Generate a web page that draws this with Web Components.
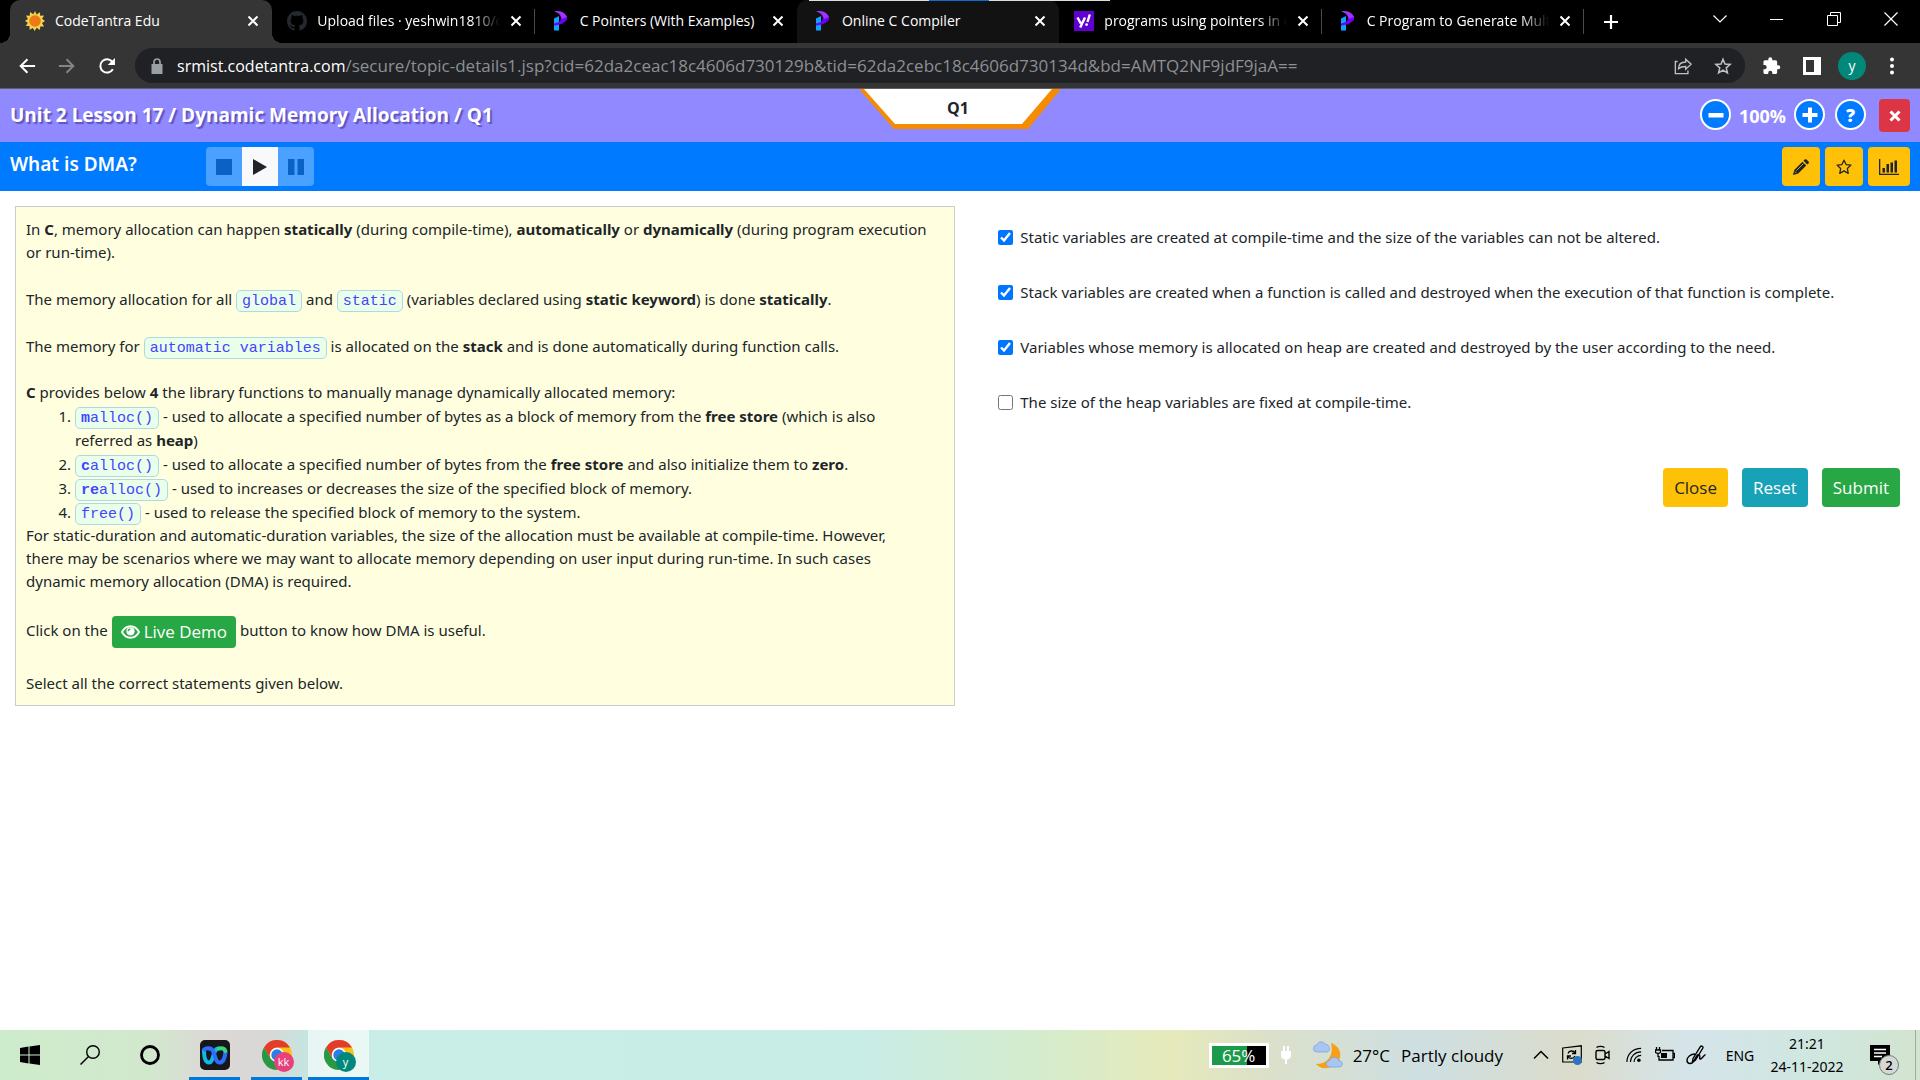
<!DOCTYPE html>
<html lang="en">
<head>
<meta charset="utf-8">
<title>CodeTantra Edu</title>
<style>
  html, body { margin: 0; height: 100%; }
  body { font-family: "Open Sans", "Noto Sans", sans-serif; color: #212529; background: #fff; }
</style>
</head>
<body>
<app-desktop>
  <tab-strip slot="tabs">
    <browser-tab icon="sun" state="active">CodeTantra Edu</browser-tab>
    <browser-tab icon="github">Upload files · yeshwin1810/c</browser-tab>
    <browser-tab icon="programiz" state="plain">C Pointers (With Examples)</browser-tab>
    <browser-tab icon="programiz" state="hover">Online C Compiler</browser-tab>
    <browser-tab icon="yahoo">programs using pointers in c</browser-tab>
    <browser-tab icon="programiz">C Program to Generate Multip</browser-tab>
  </tab-strip>
  <address-bar slot="address"></address-bar>
  <lesson-header slot="header">Unit 2 Lesson 17 / Dynamic Memory Allocation / Q1</lesson-header>
  <lesson-toolbar slot="toolbar">What is DMA?</lesson-toolbar>
  <question-card slot="question"></question-card>
  <answer-form slot="answers">
    <answer-option checked>Static variables are created at compile-time and the size of the variables can not be altered.</answer-option>
    <answer-option checked>Stack variables are created when a function is called and destroyed when the execution of that function is complete.</answer-option>
    <answer-option checked>Variables whose memory is allocated on heap are created and destroyed by the user according to the need.</answer-option>
    <answer-option>The size of the heap variables are fixed at compile-time.</answer-option>
    <action-button slot="actions" tone="warning">Close</action-button>
    <action-button slot="actions" tone="info">Reset</action-button>
    <action-button slot="actions" tone="success">Submit</action-button>
  </answer-form>
  <task-bar slot="taskbar"></task-bar>
</app-desktop>

<script>
const ICONS = {
  sun: ['0 0 20 20', '<path fill="#f3d34a" d="M10 0l1.600 3.400L15 1.200l.2 3.600 3.900-.4-2 3.300L20 10l-3 1.900 2 3.600-3.700-.1-.6 3.700-3-2.300L9.600 20l-1.700-3.100-3.300 1.900-.1-3.700-3.700-.2 2-3.200L0 10l2.900-2L1 4.600l3.700.1.4-3.600 3.200 2.200z"/><circle cx="10" cy="10" r="5.800" fill="#ee7a17"/>'],
  github: ['0 0 16 16', '<path fill="#24292f" d="M8 0C3.580 0 0 3.580 0 8c0 3.540 2.290 6.530 5.470 7.590.4.070.55-.17.55-.38 0-.19-.01-.82-.01-1.490-2.010.37-2.530-.49-2.690-.94-.09-.23-.48-.94-.82-1.130-.28-.15-.68-.52-.01-.53.63-.01 1.080.58 1.230.82.72 1.210 1.870.87 2.330.66.07-.52.28-.87.51-1.070-1.780-.2-3.640-.89-3.640-3.950 0-.87.31-1.590.82-2.150-.08-.2-.36-1.020.08-2.120 0 0 .67-.21 2.200.82.64-.18 1.320-.27 2-.27s1.360.09 2 .27c1.530-1.040 2.200-.82 2.200-.82.44 1.100.16 1.920.08 2.120.51.56.82 1.270.82 2.150 0 3.070-1.870 3.750-3.650 3.950.29.25.54.73.54 1.480 0 1.070-.01 1.930-.01 2.200 0 .21.15.46.55.38A8.010 8.010 0 0016 8c0-4.420-3.580-8-8-8z"/>'],
  programiz: ['0 0 20 20', '<path fill="#11a2ff" d="M4 7.500 9 5v14.500H4z"/><path fill="#6a00f4" d="M4 12.500c6-1 7-3 7-6L8 0l9 5.500v3C15 12 10 14 4 14.500z"/><path fill="#a033ff" d="M4 0c7-.5 11 1.500 13 6l-5 2C11 3.500 8 2 4 0z"/>'],
  yahoo: ['0 0 20 20', '<path fill="#6001d2" d="M0 0h20v20H0z"/><path fill="none" stroke="#fff" stroke-width="2.400" d="M3.500 6.500l3.300 6M11 6.500l-4.800 10M15.800 3.500l-2.300 7.500"/><circle cx="12.600" cy="13.600" r="1.400" fill="#fff"/>'],
  x: ['0 0 12 12', '<path fill="none" stroke="currentColor" stroke-width="2" d="M1.500 1.500l9 9M10.500 1.500l-9 9"/>'],
  plus: ['0 0 16 16', '<path fill="none" stroke="currentColor" stroke-width="2.200" d="M8 1v14M1 8h14"/>'],
  down: ['0 0 16 16', '<path fill="none" stroke="currentColor" stroke-width="1.200" d="M1.500 4.500 8 11l6.500-6.500"/>'],
  up: ['0 0 16 16', '<path fill="none" stroke="currentColor" stroke-width="1.500" d="M1 11.500 8 4.500l7 7"/>'],
  min: ['0 0 16 16', '<path stroke="currentColor" d="M1 8.500h13"/>'],
  max: ['0 0 16 16', '<path fill="none" stroke="currentColor" d="M1.500 4.500h10v10h-10zM4.500 4.500v-3h10v10h-3"/>'],
  win: ['0 0 16 16', '<path fill="none" stroke="currentColor" stroke-width="1.200" d="M1.500 1.500l13 13M14.500 1.500l-13 13"/>'],
  back: ['0 0 20 20', '<path fill="none" stroke="currentColor" stroke-width="2.200" d="M19 10H3M10.500 2.500 3 10l7.500 7.500"/>'],
  forward: ['0 0 20 20', '<path fill="none" stroke="currentColor" stroke-width="2.200" d="M1 10h16M9.500 2.500 17 10l-7.500 7.500"/>'],
  reload: ['0 0 20 20', '<path fill="none" stroke="currentColor" stroke-width="2.200" d="M16.500 13.500A7.400 7.400 0 1 1 16 5.500"/><path fill="currentColor" d="M18.800 1v8h-8z"/>'],
  lock: ['0 0 16 16', '<path fill="currentColor" d="M2.500 6h11v10h-11z"/><path fill="none" stroke="currentColor" stroke-width="1.700" d="M5 7V4a3 3 0 0 1 6 0v3"/>'],
  share: ['0 0 20 20', '<path fill="none" stroke="currentColor" stroke-width="1.500" d="M4 5H1.500v13.500h14V15M5 13c0-5 3-7.500 8-7.500V2.500L19 8l-6 5.500v-3c-4 0-6 .5-8 2.500z"/>'],
  star: ['0 0 20 20', '<path fill="none" stroke="currentColor" stroke-width="1.700" stroke-linejoin="miter" d="M10 2.500l2.200 5.300 5.700.5-4.300 3.700 1.300 5.600-4.900-3-4.900 3 1.300-5.600-4.300-3.700 5.700-.5z"/>'],
  puzzle: ['0 0 20 20', '<path fill="currentColor" d="M17 9.200h-1.300V5.400c0-.9-.7-1.700-1.700-1.700h-3.700V2.600a2.200 2.200 0 0 0-4.400 0v1.100H2.200c-.9 0-1.700.8-1.700 1.700V9h1.300a2.300 2.300 0 0 1 0 4.600H.5v3.700c0 .9.800 1.700 1.700 1.700h3.600v-1.300a2.300 2.300 0 0 1 4.600 0V19H14c1 0 1.700-.8 1.700-1.700v-3.700H17a2.200 2.200 0 0 0 0-4.400z"/>'],
  panel: ['0 0 18 18', '<path fill="currentColor" d="M0 0h18v18H0z"/><path fill="#353535" d="M3 3h8v12H3z"/>'],
  dots: ['0 0 18 18', '<circle cx="9" cy="2.500" r="2" fill="currentColor"/><circle cx="9" cy="9" r="2" fill="currentColor"/><circle cx="9" cy="15.500" r="2" fill="currentColor"/>'],
  minusThick: ['0 0 16 16', '<path fill="currentColor" d="M.5 6h15v4.500H.5z"/>'],
  plusThick: ['0 0 16 16', '<path fill="currentColor" d="M6 .5h4V6h5.500v4H10v5.500H6V10H.5V6H6z"/>'],
  times: ['0 0 12 12', '<path fill="none" stroke="currentColor" stroke-width="3" d="M1.500 1.500l9 9M10.500 1.500l-9 9"/>'],
  stop: ['0 0 16 16', '<path fill="currentColor" d="M0 0h16v16H0z"/>'],
  play: ['0 0 16 16', '<path fill="currentColor" d="M1 0l14 8-14 8z"/>'],
  pause: ['0 0 16 16', '<path fill="currentColor" d="M0 0h6.500v16H0zM9.500 0H16v16H9.500z"/>'],
  pencil: ['0 0 16 16', '<path fill="currentColor" d="M0 16l1.200-5L9.500 2.700l3.800 3.800L5 14.800zM10.500 1.800l1.200-1.200c.6-.6 1.200-.6 1.800 0l2 2c.6.6.6 1.200 0 1.800l-1.200 1.200z"/><path stroke="#ffc107" stroke-width=".8" d="M3.500 11.500l7-7M1.700 12.300l2 2"/>'],
  starO: ['0 0 20 20', '<path fill="none" stroke="currentColor" stroke-width="1.600" stroke-linejoin="round" d="M10 1.500l2.600 5.500 6 .7-4.400 4.200 1.100 6-5.300-3-5.300 3 1.100-6L1.400 7.700l6-.7z"/>'],
  chart: ['0 0 20 16', '<path fill="currentColor" d="M0 0h1.300v14.700H20V16H0zM3.500 9H6v4.500H3.500zM7.500 5H10v8.500H7.500zM11.500 3.500H14v10h-2.500zM15.500 1.500H18v12h-2.500z"/>'],
  eye: ['0 0 20 14', '<path fill="none" stroke="currentColor" stroke-width="2" d="M1 7c4.500-8 13.500-8 18 0-4.500 8-13.500 8-18 0z"/><circle cx="10" cy="6.300" r="4.300" fill="currentColor"/><path fill="none" stroke="#28a745" stroke-width="1.200" d="M7.600 6.300c0-1.400 1-2.400 2.400-2.400"/>'],
  windows: ['0 0 20 20', '<path fill="#000" d="M0 2.900 8.500 1.600V9.500H0zM9.500 1.400 20 0v9.500H9.500zM0 10.500h8.500v7.900L0 17.100zM9.500 10.500H20V20L9.500 18.600z"/>'],
  search: ['0 0 20 20', '<circle cx="13" cy="7" r="6.300" fill="none" stroke="#000" stroke-width="1.400"/><path stroke="#000" stroke-width="1.500" d="M8.500 11.500.5 19.500"/>'],
  cortana: ['0 0 20 20', '<circle cx="10" cy="10" r="8.500" fill="none" stroke="#000" stroke-width="2.800"/>'],
  webex: ['0 0 30 30', '<rect width="30" height="30" rx="5" fill="#15171b"/><g fill="none" stroke-linecap="round" stroke-width="4"><path stroke="#12b7e8" d="M4 10c0 7 1.500 12.500 5 12.500 5 0 3.500-14 9.500-14"/><path stroke="#2f6bff" d="M9.500 8.500c6 0 4.500 14 10 14 4 0 5.500-5 6-11"/><path stroke="#2f6bff" d="M4.500 9.500c.5-1 3-1.500 5-1"/><path stroke="#37d67a" d="M19 8.500c3-.5 5.500 0 6.300 2.500"/></g>'],
  chrome: ['0 0 30 30', '<circle cx="15" cy="15" r="15" fill="#fbc116"/><path fill="#e33b2e" d="M2 7.500 8.600 18.600A7.500 7.500 0 0 1 15 7.500h13A15 15 0 0 0 2 7.500z"/><path fill="#279847" d="M2 7.500a15 15 0 0 0 13 22.500l6.500-11.200L9 19.200z"/><circle cx="15" cy="15" r="7.200" fill="#fff"/><circle cx="15" cy="15" r="5.700" fill="#2b7de9"/>'],
  plug: ['0 0 10 18', '<path fill="#fff" d="M2 0h2v5h2V0h2v5h2v4c0 3-1.500 4-4 4.500V18H4v-4.500C1.500 13 0 12 0 9V5h2z"/>'],
  weather: ['0 0 30 28', '<path fill="#f6a01a" d="M18 2c9 3 13 13 5 21-5 5-15 6-20 0 12 0 18-9 15-21z"/><path fill="#a9c6f2" stroke="#7da2dc" stroke-width=".8" d="M4 11a3.500 3.500 0 0 1 0-7C5 0 11 0 12.500 3.500 17 3 18 10.500 14 11zM17 26c-4.500 0-5-6-.5-6.300C18 15 25 15.500 25.500 19.500c5 0 5 6.500.5 6.500z"/>'],
  sync: ['0 0 20 20', '<path fill="none" stroke="#000" stroke-width="1.200" d="M.7 3 19.300.8v16L.7 17z"/><path fill="none" stroke="#000" stroke-width="1.300" d="M6 8.500c1-3 5.500-3.500 7-.5M13.500 5v3.500H10M13 11c-1.500 3-5.500 3.200-7 .5M5.500 14.500V11H9"/><circle cx="15.500" cy="15.500" r="4.500" fill="#2f74c0"/>'],
  camera: ['0 0 18 20', '<path fill="none" stroke="#000" stroke-width="1.400" d="M3.500 5.500h6a1.500 1.500 0 0 1 1.500 1.500v6a1.500 1.500 0 0 1-1.500 1.500h-6A1.500 1.500 0 0 1 2 13V7a1.500 1.500 0 0 1 1.500-1.500zM11 9l4-2.500v7L11 11M2.500 2.500c2-1.500 6-1.500 8 0M2.500 17.500c2 1.500 6 1.500 8 0"/>'],
  wifi: ['0 0 18 18', '<path fill="none" stroke="#000" stroke-width="1.300" d="M1 17C1 8 8 1.500 17 1.500M5 17c0-6.500 5-11.500 12-11.500M9 17c0-4 3.500-7.500 8-7.500"/><circle cx="14.500" cy="15" r="2" fill="#000"/>'],
  battery: ['0 0 20 16', '<path fill="none" stroke="#000" stroke-width="1.300" d="M7 3.500h11v9.500H4V9M18.500 6.500h1v4h-1M1.500 0v3M4.500 0v3M.5 3h5v2.500c-2 1.500-3 1.500-5 0zM3 6v4"/><path fill="#000" d="M6 6h6v5H6z"/>'],
  pen: ['0 0 20 20', '<path fill="none" stroke="#000" stroke-width="1.400" d="M7 13.500 14.500 1.500c.8-1 3 .2 2.400 1.500L9.500 15l-3.200 2.500zM9 9c-4.500 0-8 3-8 6.500s4.500 4 6.500 1 3.500-8 5.500-7-.5 5 1.500 4.500S17 11 19.500 9.500"/>'],
  note: ['0 0 20 20', '<path fill="#000" d="M0 0h20v16h-8l-4 4v-4H0z"/><path stroke="#fff" stroke-width="1.500" d="M4 4.500h12M4 8h12M4 11.500h8"/>'],
};

const define = (name, html, setup) => customElements.define(name, class extends HTMLElement {
  constructor() {
    super();
    const t = document.createElement('template');
    t.innerHTML = html;
    this.attachShadow({ mode: 'open' }).append(t.content.cloneNode(true));
  }
  connectedCallback() { if (setup) setup(this, this.shadowRoot); }
});

define('ui-icon', `
<style>:host { display: inline-block; flex: none; width: 16px; height: 16px; } svg { display: block; width: 100%; height: 100%; }</style>
<svg aria-hidden="true"></svg>`, (el, root) => {
  const [box, body] = ICONS[el.getAttribute('name')];
  const svg = root.querySelector('svg');
  svg.setAttribute('viewBox', box);
  svg.innerHTML = body;
});

define('app-desktop', `
<style>
  :host { display: flex; flex-direction: column; min-height: 100vh; }
  main { flex: 1; display: grid; grid-template-columns: minmax(0, 28fr) minmax(0, 27fr); align-items: start; gap: 38px; padding: 15px 20px 15px 15px; }
</style>
<slot name="tabs"></slot><slot name="address"></slot>
<slot name="header"></slot><slot name="toolbar"></slot>
<main><slot name="question"></slot><slot name="answers"></slot></main>
<slot name="taskbar"></slot>`);

define('tab-strip', `
<style>
  :host { display: flex; height: 43px; padding-left: 10px; background: #000; color: #fff; position: relative; }
  .tabs { display: flex; flex: 0 1 1574px; min-width: 0; }
  button { border: 0; padding: 0; background: none; color: inherit; display: flex; align-items: center; justify-content: center; }
  .add { width: 53px; }
  .win { margin: 0 1px 0 auto; display: flex; height: 38px; }
  .win button { width: 57px; }
  .bar { position: absolute; top: 0; left: 809px; width: 301px; height: 1px; background: linear-gradient(90deg, #ddd 120px, #0a6fd0 120px 180px, #ddd 180px); }
</style>
<div class="tabs"><slot></slot></div>
<button class="add" aria-label="New tab"><ui-icon name="plus"></ui-icon></button>
<div class="win">
  <button aria-label="Search tabs"><ui-icon name="down"></ui-icon></button>
  <button aria-label="Minimize"><ui-icon name="min"></ui-icon></button>
  <button aria-label="Restore"><ui-icon name="max"></ui-icon></button>
  <button aria-label="Close window"><ui-icon name="win"></ui-icon></button>
</div>
<div class="bar"></div>`);

define('browser-tab', `
<style>
  :host { display: flex; align-items: center; flex: 1 1 0; min-width: 0; box-sizing: border-box; padding: 0 13px 2px 15px; gap: 10px; font-size: 14px; position: relative; }
  :host([state=active]) { background: #353535; border-radius: 10px 10px 0 0; }
  :host([state=hover]) { background: #121212; border-radius: 10px 10px 0 0; }
  :host([state=active])::before, :host([state=active])::after { content: ""; position: absolute; bottom: 0; width: 10px; height: 10px; background: radial-gradient(circle at 0 0, transparent 10px, #353535 10px); }
  :host([state=active])::before { left: -10px; }
  :host([state=active])::after { right: -10px; background: radial-gradient(circle at 100% 0, transparent 10px, #353535 10px); }
  .line { position: absolute; right: 0; top: 9px; height: 25px; width: 1px; background: #4a4a4a; }
  :host([state]) .line { display: none; }
  .title { flex: 1; min-width: 0; overflow: hidden; white-space: nowrap; line-height: 20px; -webkit-mask-image: linear-gradient(90deg, #000 calc(100% - 28px), transparent); }
  :host([state]) .title { -webkit-mask-image: none; }
  .fav { display: flex; }
  .fav ui-icon { width: 20px; height: 20px; }
  button { border: 0; padding: 0; background: none; color: #fff; display: flex; }
  button ui-icon { width: 12px; height: 12px; }
</style>
<span class="fav"></span>
<span class="title"><slot></slot></span>
<button aria-label="Close tab"><ui-icon name="x"></ui-icon></button>
<span class="line"></span>`, (el, root) => {
  root.querySelector('.fav').innerHTML = `<ui-icon name="${el.getAttribute('icon')}"></ui-icon>`;
});

define('address-bar', `
<style>
  :host { display: flex; align-items: center; height: 45px; background: #353535; color: #fff; border-bottom: 1px solid #5f5f5f; }
  button { border: 0; padding: 0; background: none; color: inherit; display: flex; justify-content: center; width: 40px; }
  .nav { display: flex; padding: 0 8px 0 7px; }
  .nav button { width: 40px; }
  .dim { color: #858585; }
  ui-icon { width: 18px; height: 18px; }
  .pill { flex: 1; display: flex; align-items: center; height: 35px; border-radius: 18px; background: #202124; padding-right: 2px; font-size: 17px; }
  .pill ui-icon[name=lock] { width: 16px; height: 16px; color: #9aa0a6; margin: 0 12px 0 14px; }
  label { line-height: 24px; font-size: 16px; }
  input { flex: 1; min-width: 0; border: 0; padding: 0; background: none; color: #8c9095; font: inherit; line-height: 24px; outline: 0; }
  .pill button { color: #bdc1c6; }
  .tools { display: flex; align-items: center; padding: 0 8px 0 7px; }
  .avatar { width: 28px; height: 28px; margin: 0 6px; border-radius: 50%; background: #00897b; font: 14px/26px "Open Sans", sans-serif; align-items: center; }
</style>
<div class="nav">
  <button aria-label="Back"><ui-icon name="back"></ui-icon></button>
  <button class="dim" aria-label="Forward"><ui-icon name="forward"></ui-icon></button>
  <button aria-label="Reload"><ui-icon name="reload"></ui-icon></button>
</div>
<div class="pill">
  <ui-icon name="lock"></ui-icon><label for="url">srmist.codetantra.com</label>
  <input id="url" value="/secure/topic-details1.jsp?cid=62da2ceac18c4606d730129b&amp;tid=62da2cebc18c4606d730134d&amp;bd=AMTQ2NF9jdF9jaA==">
  <button aria-label="Share"><ui-icon name="share"></ui-icon></button>
  <button aria-label="Bookmark"><ui-icon name="star"></ui-icon></button>
</div>
<div class="tools">
  <button aria-label="Extensions"><ui-icon name="puzzle"></ui-icon></button>
  <button aria-label="Side panel"><ui-icon name="panel"></ui-icon></button>
  <button class="avatar">y</button>
  <button aria-label="Menu"><ui-icon name="dots"></ui-icon></button>
</div>`);

define('lesson-header', `
<style>
  :host { display: grid; grid-template-columns: 1fr 202px 1fr; height: 53px; background: #9189ff; color: #fff; padding: 0 10px; }
  h1 { margin: 0; font-size: 19px; line-height: 52px; font-weight: 700; white-space: nowrap; text-shadow: 2px 2px 1px rgba(60, 50, 150, .6); }
  .badge { height: 40px; background: #f58b00; clip-path: polygon(0 0, 100% 0, 169px 100%, 35px 100%); display: grid; color: #212529; }
  .badge span { grid-area: 1 / 1; clip-path: polygon(5px 0, 193px 0, 163px 35px, 36px 35px); background: #fff; text-align: center; font-size: 16px; font-weight: 700; line-height: 38px; padding-right: 4px; }
  .zoom { display: flex; justify-content: flex-end; align-items: flex-start; padding-top: 10px; }
  button { box-sizing: border-box; border: 2px solid #fff; border-radius: 50%; width: 31px; height: 31px; background: #007bff; color: #fff; padding: 0; display: flex; align-items: center; justify-content: center; font: 800 18px/24px "Open Sans", sans-serif; }
  output { width: 63px; text-align: center; font-weight: 700; font-size: 18px; line-height: 34px; }
  .help { margin: 0 13px 0 10px; }
  .close { border: 0; border-radius: 4px; height: 33px; background: #dc3545; }
  .close ui-icon { width: 12px; height: 12px; }
</style>
<h1><slot></slot></h1>
<div class="badge"><span>Q1</span></div>
<div class="zoom">
  <button aria-label="Zoom out"><ui-icon name="minusThick"></ui-icon></button><output>100%</output>
  <button aria-label="Zoom in"><ui-icon name="plusThick"></ui-icon></button>
  <button class="help">?</button>
  <button class="close" aria-label="Close"><ui-icon name="times"></ui-icon></button>
</div>`);

define('lesson-toolbar', `
<style>
  :host { display: flex; height: 49px; background: #007bff; color: #fff; padding: 0 10px; align-items: center; box-sizing: border-box; }
  h2 { margin: 0; width: 196px; font-family: "Noto Sans", sans-serif; font-size: 19px; line-height: 44px; font-weight: 600; align-self: flex-start; }
  button { border: 0; padding: 0; height: 39px; background: #4aa1ff; color: #0a62c4; display: flex; align-items: center; justify-content: center; }
  .group { display: flex; border-radius: 4px; overflow: hidden; }
  .group button { width: 36px; }
  .group button.on { background: #f8f9fa; color: #212529; }
  .tools { margin-left: auto; display: flex; gap: 5px; }
  .tools button { background: #ffc107; color: #212529; border-radius: 4px; width: 38px; }
  .tools button.wide { width: 42px; }
  .wide ui-icon { width: 20px; }
</style>
<h2><slot></slot></h2>
<div class="group">
  <button aria-label="Stop"><ui-icon name="stop"></ui-icon></button>
  <button class="on" aria-label="Play"><ui-icon name="play"></ui-icon></button>
  <button aria-label="Pause"><ui-icon name="pause"></ui-icon></button>
</div>
<div class="tools">
  <button aria-label="Edit"><ui-icon name="pencil"></ui-icon></button>
  <button aria-label="Favourite"><ui-icon name="starO"></ui-icon></button>
  <button class="wide" aria-label="Statistics"><ui-icon name="chart"></ui-icon></button>
</div>`);

define('code-chip', `
<style>
  :host { padding: 2px 5px 1px; border: 1px solid #add8e6; border-radius: 5px; background: #eaffea; color: #4444ff; font: 15px/18px "Liberation Mono", monospace; }
</style><slot></slot>`);

define('question-card', `
<style>
  :host { display: block; box-sizing: border-box; border: 1px solid #ccc; background: #ffffe0; padding: 11px 10px 10px; font: 15px/23px "Noto Sans", sans-serif; }
  p { margin: 0 0 23px; }
  p.tight { margin: 0; }
  p.code, li { line-height: 24px; }
  ol { margin: 0; padding-left: 49px; }
  .demo { margin: 0 0 24px; }
  p:last-child { margin: 0; }
  button { border: 0; border-radius: 4px; background: #28a745; color: #fff; height: 32px; padding: 0 9px; font: 17px/32px "Open Sans", sans-serif; display: inline-flex; gap: 4px; align-items: center; vertical-align: middle; }
  button ui-icon { width: 19px; height: 14px; }
</style>
<p>In <b>C</b>, memory allocation can happen <b>statically</b> (during compile-time), <b>automatically</b> or <b>dynamically</b> (during program execution or run-time).</p>
<p class="code">The memory allocation for all <code-chip>global</code-chip> and <code-chip>static</code-chip> (variables declared using <b>static keyword</b>) is done <b>statically</b>.</p>
<p class="code">The memory for <code-chip>automatic variables</code-chip> is allocated on the <b>stack</b> and is done automatically during function calls.</p>
<p class="tight"><b>C</b> provides below <b>4</b> the library functions to manually manage dynamically allocated memory:</p>
<ol>
  <li><code-chip><b>m</b>alloc()</code-chip> - used to allocate a specified number of bytes as a block of memory from the <b>free store</b> (which is also<br>referred as <b>heap</b>)</li>
  <li><code-chip><b>c</b>alloc()</code-chip> - used to allocate a specified number of bytes from the <b>free store</b> and also initialize them to <b>zero</b>.</li>
  <li><code-chip><b>re</b>alloc()</code-chip> - used to increases or decreases the size of the specified block of memory.</li>
  <li><code-chip>free()</code-chip> - used to release the specified block of memory to the system.</li>
</ol>
<p>For static-duration and automatic-duration variables, the size of the allocation must be available at compile-time. However,<br>there may be scenarios where we may want to allocate memory depending on user input during run-time. In such cases<br>dynamic memory allocation (DMA) is required.</p>
<p class="demo">Click on the <button><ui-icon name="eye"></ui-icon>Live Demo</button> button to know how DMA is useful.</p>
<p>Select all the correct statements given below.</p>`);

define('answer-form', `
<style>
  :host { display: block; padding: 20px 0 0 5px; }
  form { display: flex; flex-direction: column; gap: 32px; }
  .actions { display: flex; justify-content: flex-end; gap: 14px; padding-top: 22px; }
</style>
<form><slot></slot><div class="actions"><slot name="actions"></slot></div></form>`);

define('answer-option', `
<style>
  :host { display: block; }
  label { display: flex; align-items: center; font: 15px/23px "Noto Sans", sans-serif; }
  input { width: 15px; height: 15px; margin: 0 7px 0 0; accent-color: #0075ff; flex: none; }
</style>
<label><input type="checkbox"><span><slot></slot></span></label>`, (el, root) => { root.querySelector('input').checked = el.hasAttribute('checked'); });

define('action-button', `
<style>
  :host { display: block; }
  button { border: 0; border-radius: 4px; height: 39px; padding: 0 11px; font: 17px/39px "Open Sans", sans-serif; color: #fff; background: #28a745; }
  :host([tone=warning]) button { background: #ffc107; color: #212529; }
  :host([tone=info]) button { background: #17a2b8; }
</style>
<button type="button"><slot></slot></button>`);

define('task-bar', `
<style>
  :host { display: flex; height: 50px; box-sizing: border-box; color: #000; background: linear-gradient(90deg, #cdeccb 0, #d2e8cd 150px, #dcd8d6 210px, #d8d8d6 270px, #c4e6e2 310px, #c9eee8 380px, #c8ece6 45%, #d4eccd 54%, #e6eabb 61%, #dbe0c9 66%, #cedfe2 74%, #dbdccb 82%, #d5e4ea 88%, #cfe7df 95%, #d3e4cf 100%); }
  button { border: 0; padding: 0; background: none; color: inherit; font: inherit; display: flex; align-items: center; justify-content: center; }
  .start { width: 60px; }
  .start ui-icon { width: 20px; height: 20px; }
  .app { width: 51px; margin: 0 0 0 11px; box-shadow: inset 0 -3px #0078d7; position: relative; }
  .app:nth-of-type(4) { margin-left: 9px; }
  .app ui-icon { width: 30px; height: 30px; }
  .active { width: 61px; margin-left: 6px; background: rgba(255, 255, 255, .6); }
  .tag { position: absolute; left: calc(50% - 3px); top: 22px; width: 20px; height: 20px; border-radius: 50%; background: #e8407a; color: #fff; font-size: 11px; line-height: 19px; text-align: center; }
  .active .tag { background: #00897b; }
  .tray { margin-left: auto; display: flex; align-items: center; }
  .charge { box-sizing: border-box; width: 60px; height: 25px; border: 3px solid #fff; background: linear-gradient(90deg, #1b9a4b 65%, #000 65%); color: #fff; font-size: 17px; line-height: 19px; text-align: center; }
  ui-icon[name=plug] { width: 10px; height: 18px; margin: 0 22px 0 12px; }
  .weather { gap: 10px; font-size: 17px; }
  .weather ui-icon { width: 30px; height: 28px; }
  .weather span + span { margin-left: 1px; }
  .icons { display: flex; margin-left: 22px; }
  .icons button { width: 31px; }
  .icons ui-icon { width: 20px; height: 20px; }
  .icons ui-icon.s { width: 16px; height: 16px; }
  .lang, .clock { font: 14px/23px "Noto Sans", sans-serif; }
  .lang { width: 58px; }
  .clock { flex-direction: column; width: 76px; }
  .note { width: 70px; position: relative; align-self: stretch; }
  .note ui-icon { width: 20px; height: 20px; }
  .count { position: absolute; left: 34px; top: 25px; width: 18px; height: 18px; border: 1px solid #777; border-radius: 50%; background: #d5d9d5; font-size: 13px; line-height: 18px; font-weight: 600; }
  .edge { width: 5px; box-sizing: border-box; align-self: stretch; border-left: 1px solid #a0aaa0; }
</style>
<button class="start" aria-label="Start"><ui-icon name="windows"></ui-icon></button>
<button class="start" aria-label="Search"><ui-icon name="search"></ui-icon></button>
<button class="start" aria-label="Cortana"><ui-icon name="cortana"></ui-icon></button>
<button class="app" aria-label="Webex"><ui-icon name="webex"></ui-icon></button>
<button class="app"><ui-icon name="chrome"></ui-icon><span class="tag">kk</span></button>
<button class="app active"><ui-icon name="chrome"></ui-icon><span class="tag">y</span></button>
<div class="tray">
  <span class="charge">65%</span><ui-icon name="plug"></ui-icon>
  <button class="weather"><ui-icon name="weather"></ui-icon><span>27°C</span><span>Partly cloudy</span></button>
  <div class="icons">
    <button aria-label="Show hidden icons"><ui-icon class="s" name="up"></ui-icon></button>
    <button aria-label="Updates"><ui-icon name="sync"></ui-icon></button>
    <button aria-label="Meet now"><ui-icon name="camera"></ui-icon></button>
    <button aria-label="Network"><ui-icon class="s" name="wifi"></ui-icon></button>
    <button aria-label="Battery"><ui-icon name="battery"></ui-icon></button>
    <button aria-label="Pen"><ui-icon name="pen"></ui-icon></button>
  </div>
  <button class="lang">ENG</button>
  <button class="clock"><span>21:21</span><span>24-11-2022</span></button>
  <button class="note"><ui-icon name="note"></ui-icon><span class="count">2</span></button>
  <span class="edge"></span>
</div>`);
</script>
</body>
</html>
